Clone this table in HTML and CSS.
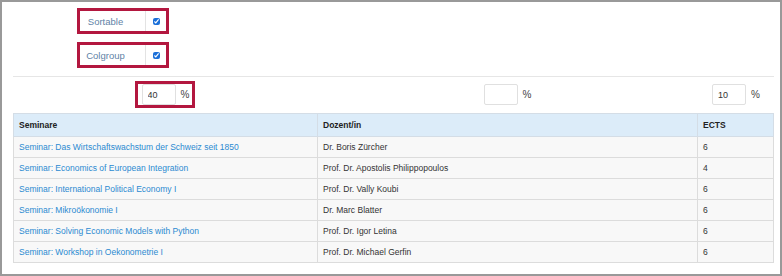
FILE: index.html
```html
<!DOCTYPE html>
<html lang="de">
<head>
    <meta charset="UTF-8" />
    <title>Seminare</title>
    <link rel="stylesheet" href="styles.css">
</head>
<body>
    <div class="frame">
        <div class="options">
            <div class="check-group">
                <span class="check-label">Sortable</span>
                <span class="check-addon"><input type="checkbox" checked></span>
            </div>
            <div class="check-group">
                <span class="check-label">Colgroup</span>
                <span class="check-addon"><input type="checkbox" checked></span>
            </div>
        </div>
        <div class="rule"></div>
        <div class="pct-row">
            <div class="pct-cell">
                <div class="pct-group marked"><input class="pct-input" type="text" value="40"><span>%</span></div>
            </div>
            <div class="pct-cell">
                <div class="pct-group"><input class="pct-input" type="text" value=""><span>%</span></div>
            </div>
            <div class="pct-cell">
                <div class="pct-group"><input class="pct-input" type="text" value="10"><span>%</span></div>
            </div>
        </div>
        <table class="courses">
            <colgroup>
                <col class="col-seminar">
                <col class="col-dozent">
                <col class="col-ects">
            </colgroup>
            <thead>
                <tr><th>Seminare</th><th>Dozent/in</th><th>ECTS</th></tr>
            </thead>
            <tbody>
                <tr><td><a href="#">Seminar: Das Wirtschaftswachstum der Schweiz seit 1850</a></td><td>Dr. Boris Zürcher</td><td>6</td></tr>
                <tr><td><a href="#">Seminar: Economics of European Integration</a></td><td>Prof. Dr. Apostolis Philippopoulos</td><td>4</td></tr>
                <tr><td><a href="#">Seminar: International Political Economy I</a></td><td>Prof. Dr. Vally Koubi</td><td>6</td></tr>
                <tr><td><a href="#">Seminar: Mikroökonomie I</a></td><td>Dr. Marc Blatter</td><td>6</td></tr>
                <tr><td><a href="#">Seminar: Solving Economic Models with Python</a></td><td>Prof. Dr. Igor Letina</td><td>6</td></tr>
                <tr><td><a href="#">Seminar: Workshop in Oekonometrie I</a></td><td>Prof. Dr. Michael Gerfin</td><td>6</td></tr>
            </tbody>
        </table>
    </div>
</body>
</html>
```

FILE: styles.css
```css
body {
    margin: 0;
    font-family: 'Liberation Sans', Arial, Helvetica, sans-serif;
    font-size: 8.5px;
    color: #333;
    background: #fff;
}
.frame {
    width: 782px;
    height: 276px;
    box-sizing: border-box;
    border: 2px solid #999;
    padding: 6px 6px 0 11px;
}
.options {
    display: flex;
    flex-direction: column;
    align-items: flex-start;
    gap: 8px;
    padding-left: 64px;
}
.check-group {
    display: flex;
    width: 92px;
    height: 26px;
    box-sizing: border-box;
    border: 3px solid #b3173f;
    background: #fff;
}
.check-label {
    width: 65px;
    box-sizing: border-box;
    padding-right: 14px;
    display: flex;
    align-items: center;
    justify-content: center;
    color: #5f82a6;
    font-size: 9.5px;
}
.check-addon {
    flex: 1;
    display: flex;
    align-items: center;
    justify-content: center;
    border-left: 1px solid #e3e3e3;
}
.check-addon input {
    width: 7px;
    height: 7px;
    margin: 0;
    accent-color: #1b6fd8;
}
.rule {
    margin-top: 8px;
    border-top: 1px solid #e6e6e6;
}
.pct-row {
    display: grid;
    grid-template-columns: 304px 380px 1fr;
    margin-top: 4px;
}
.pct-cell {
    display: flex;
    justify-content: center;
}
.pct-group {
    display: flex;
    align-items: center;
    gap: 5px;
    height: 27px;
    box-sizing: border-box;
    border: 3px solid transparent;
    padding: 0 3px 0 4px;
    color: #444;
    font-size: 10px;
}
.pct-group.marked {
    border-color: #b3173f;
}
.pct-input {
    width: 34px;
    height: 21px;
    box-sizing: border-box;
    border: 1px solid #e0e0e0;
    border-radius: 2px;
    padding: 0 5px;
    font-family: inherit;
    font-size: 9px;
    color: #333;
    outline: none;
}
.courses {
    margin-top: 5px;
    width: 761px;
    border-collapse: collapse;
    table-layout: fixed;
    border: 1px solid #dcdcdc;
}
.col-seminar { width: 304px; }
.col-dozent { width: 380px; }
.courses th {
    height: 22px;
    padding: 0 5px;
    text-align: left;
    font-weight: bold;
    color: #222;
    background: #dcecf9;
    border: 1px solid #d4dde6;
}
.courses td {
    height: 20px;
    padding: 0 5px;
    background: #f8f8f8;
    border: 1px solid #dcdcdc;
    white-space: nowrap;
}
.courses a {
    color: #2b8ad1;
    text-decoration: none;
}
```
